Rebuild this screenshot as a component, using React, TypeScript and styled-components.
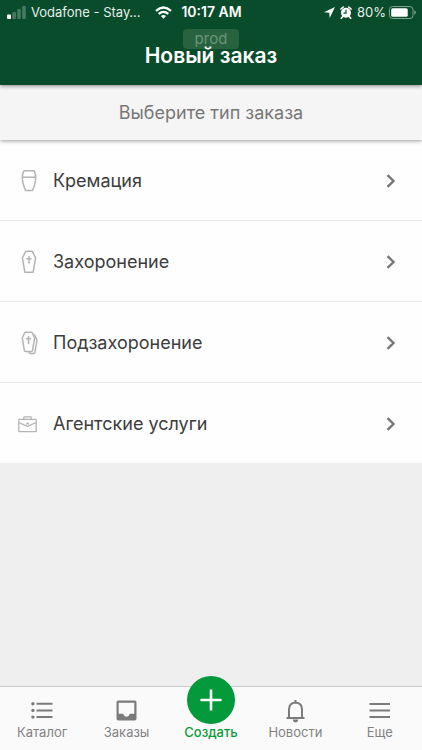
import React from 'react';
import styled, { createGlobalStyle } from 'styled-components';

const GlobalStyle = createGlobalStyle`
  *, *::before, *::after { box-sizing: border-box; }
  body { margin: 0; background: #efefef; font-family: Inter, 'Liberation Sans', sans-serif; }
`;

const Screen = styled.div`
  min-height: 100vh;
  display: flex;
  flex-direction: column;
  background: #efefef;
`;

const Header = styled.header`
  position: relative;
  z-index: 2;
  height: 85px;
  background: #094c2b;
  color: #fff;
  box-shadow: 0 1px 4px rgba(0, 0, 0, 0.45);
`;

const StatusBar = styled.div`
  display: grid;
  grid-template-columns: 1fr auto 1fr;
  align-items: center;
  height: 24px;
  padding: 0 6px 0 7px;
  font-size: 13px;
  line-height: 24px;
  color: #e6eee9;
  white-space: nowrap;
`;

const StatusGroup = styled.div<{ $end?: boolean }>`
  display: flex;
  align-items: center;
  justify-content: ${(p) => (p.$end ? 'flex-end' : 'flex-start')};
  gap: 5px;
`;

const Carrier = styled.span`
  margin-right: 9px;
`;

const Clock = styled.time`
  font-size: 14px;
  font-weight: 600;
  color: #fff;
`;

const Battery = styled.span`
  display: flex;
  align-items: center;
  gap: 3px;
`;

const EnvBadge = styled.span`
  position: absolute;
  top: 29px;
  left: 50%;
  transform: translateX(-50%);
  width: 56px;
  height: 20px;
  border-radius: 4px;
  background: #28633f;
  color: #6b957b;
  font-size: 15px;
  line-height: 20px;
  text-align: center;
`;

const Title = styled.h1`
  position: relative;
  margin: 17px 0 0;
  font-size: 21px;
  line-height: 30px;
  font-weight: 600;
  text-align: center;
`;

const Prompt = styled.p`
  position: relative;
  z-index: 1;
  margin: 0;
  height: 55px;
  padding-top: 1px;
  background: #f5f5f5;
  box-shadow: 0 1px 4px rgba(0, 0, 0, 0.4);
  color: #777;
  font-size: 18px;
  line-height: 54px;
  text-align: center;
`;

const Content = styled.main`
  flex: 1;
`;

const OrderList = styled.ul`
  margin: 0;
  padding: 0;
  list-style: none;
  background: #fefefe;
`;

const OrderItem = styled.li`
  & + & { border-top: 1px solid #e8e8e8; }
`;

const OrderButton = styled.button`
  display: flex;
  align-items: center;
  width: 100%;
  height: 80px;
  padding: 1px 26px 0 17px;
  border: 0;
  background: none;
  color: #3c3c3c;
  font-family: inherit;
  font-size: 18px;
  line-height: 24px;
  text-align: left;
  cursor: pointer;
`;

const OrderIcon = styled.svg`
  flex: none;
  width: 24px;
  height: 26px;
  margin-right: 12px;
  fill: none;
  stroke: #b4b4b4;
  stroke-width: 1.5;
  stroke-linejoin: round;
  stroke-linecap: round;
`;

const OrderLabel = styled.span`
  flex: 1;
`;

const TabBar = styled.nav`
  position: sticky;
  bottom: 0;
  display: grid;
  grid-template-columns: repeat(5, 1fr);
  grid-template-rows: minmax(0, 1fr);
  height: 64px;
  border-top: 1px solid #c9c9c9;
  background: #fafafa;
`;

const Tab = styled.a<{ $active?: boolean }>`
  display: flex;
  flex-direction: column;
  align-items: center;
  justify-content: flex-end;
  padding-bottom: 9px;
  color: ${(p) => (p.$active ? '#0a9a3c' : '#828282')};
  font-size: 13px;
  font-weight: ${(p) => (p.$active ? 500 : 400)};
  line-height: 17px;
  text-decoration: none;
`;

const TabIcon = styled.svg`
  flex: none;
  width: 30px;
  height: 28px;
  fill: none;
  stroke: #7b7b7b;
  stroke-width: 2;
`;

const CreateCircle = styled.span`
  flex: none;
  display: flex;
  align-items: center;
  justify-content: center;
  width: 48px;
  height: 48px;
  border-radius: 50%;
  background: #049a3b;
`;

const orders = [
  {
    label: 'Кремация',
    icon: (
      <path d="M7.500 2.800h9q.6 0 .9.700C18.300 5 18.700 7.500 18.700 9.500C18.700 14 17.200 18.500 15.500 22.500H8.500C6.800 18.500 5.300 14 5.300 9.500C5.300 7.500 5.700 5 6.600 3.500Q6.900 2.800 7.500 2.800zM5.500 9.300h13" />
    ),
  },
  {
    label: 'Захоронение',
    icon: (
      <>
        <path d="M8.800 2.200h6.400l3.400 6.600-2.400 14.400H7.800L5.400 8.800z" />
        <path d="M12 7.500v6.500M10 9.800h4" />
      </>
    ),
  },
  {
    label: 'Подзахоронение',
    icon: (
      <>
        <path d="M8.600 2.200h5.800q.6 0 .9.600l2.100 4.700q.3.600.1 1.200l-2 12q-.1.800-.9.800H8.300q-.8 0-.9-.8l-2-12q-.1-.6.1-1.200l2.200-4.700q.3-.6.9-.6z" />
        <path d="M11.500 6.500v7M9.500 8.800h4M17.400 4.800l2.400 4.800q.3.600.1 1.200l-2.100 11.900q-.2.800-1 .8h-3.500q-.7 0-1-.6l-.5-1.200" />
      </>
    ),
  },
  {
    label: 'Агентские услуги',
    icon: (
      <path d="M2.500 8.300h16q.7 0 .7.700v11q0 .7-.7.700h-16q-.7 0-.7-.700v-11q0-.7.7-.700zM6.800 8.300V6.500q0-.7.7-.700h6q.7 0 .7.700v1.800M1.800 11.500l8.700 3.900 8.700-3.900M9.700 13q0-.8.8-.8t.8.8" strokeWidth="1.300" />
    ),
  },
];

const tabs = [
  {
    label: 'Каталог',
    icon: (
      <>
        <path d="M9.500 7.700h16M9.500 14.400h16M9.500 21.100h16" />
        <path d="M5.900 7.700h.01M5.900 14.400h.01M5.900 21.100h.01" strokeWidth="3.400" strokeLinecap="round" />
      </>
    ),
  },
  {
    label: 'Заказы',
    icon: (
      <path
        d="M6.300 4.500h16.400q1.800 0 1.800 1.800v16.400q0 1.800-1.800 1.800H6.300q-1.800 0-1.800-1.800V6.300Q4.500 4.500 6.300 4.500zM6.700 6.700v11h4.500q.9 3 3.300 3t3.300-3h4.500v-11z"
        fill="#7b7b7b"
        fillRule="evenodd"
        stroke="none"
      />
    ),
  },
  { label: 'Создать', active: true },
  {
    label: 'Новости',
    icon: (
      <>
        <path d="M6.500 22h18M9 22v-8.500q0-6.500 6.500-7 6.500 .5 6.500 7V22" />
        <path d="M15.500 6V4M14 24.500q.3 1 1.500 1t1.500-1z" />
      </>
    ),
  },
  { label: 'Еще', icon: <path d="M4.500 8h20.500M4.500 14.500h20.500M4.500 21h20.500" /> },
];

export default function App() {
  return (
    <>
      <GlobalStyle />
      <Screen>
        <Header>
          <StatusBar>
            <StatusGroup>
              <svg width="19" height="13" viewBox="0 0 19 13" fill="#fff">
                <rect y="8.500" width="4" height="4.500" rx="1" />
                <g opacity=".25">
                  <rect x="5.300" y="6" width="3.600" height="7" rx="1" />
                  <rect x="10.200" y="3" width="3.600" height="10" rx="1" />
                  <rect x="15.200" width="3.600" height="13" rx="1" />
                </g>
              </svg>
              <Carrier>Vodafone - Stay…</Carrier>
              <svg width="17" height="13" viewBox="0 0 17 13" fill="none" stroke="#fff" strokeWidth="2.300">
                <path d="M1 4.800Q8.500-1.800 16 4.800M3.700 7.900Q8.500 3.800 13.300 7.900" />
                <path d="M8.500 12.700L5.900 10Q8.500 8 11.100 10z" fill="#fff" stroke="none" />
              </svg>
            </StatusGroup>
            <Clock>10:17 AM</Clock>
            <StatusGroup $end>
              <svg width="11" height="11" viewBox="0 0 11 11" fill="#fff">
                <path d="M11 0L0 5.300l5.300.400.4 5.300z" />
              </svg>
              <svg width="12" height="13" viewBox="0 0 12 13">
                <circle cx="6" cy="6.800" r="5" fill="#fff" />
                <path d="M.9 3L3.300 1M11.100 3L8.700 1M2.600 10.800L1.300 12.300M9.400 10.800l1.300 1.500" stroke="#fff" strokeWidth="1.600" strokeLinecap="round" />
                <path d="M6 3.700v3.500H3.500" fill="none" stroke="#094c2b" strokeWidth="1.200" />
              </svg>
              <Battery>
                80%
                <svg width="27" height="13" viewBox="0 0 27 13">
                  <rect x=".5" y=".5" width="23.500" height="12" rx="3" fill="none" stroke="#7fa28e" />
                  <rect x="2.200" y="2.200" width="16.500" height="8.600" rx="1.500" fill="#fff" />
                  <path d="M25.300 4.300q1.500.600 1.500 2.200t-1.500 2.200z" fill="#7fa28e" />
                </svg>
              </Battery>
            </StatusGroup>
          </StatusBar>
          <EnvBadge>prod</EnvBadge>
          <Title>Новый заказ</Title>
        </Header>
        <Prompt>Выберите тип заказа</Prompt>
        <Content>
          <OrderList>
            {orders.map(({ label, icon }) => (
              <OrderItem key={label}>
                <OrderButton type="button">
                  <OrderIcon viewBox="0 0 24 26" aria-hidden="true">{icon}</OrderIcon>
                  <OrderLabel>{label}</OrderLabel>
                  <svg width="10" height="14" viewBox="0 0 10 14" fill="none" stroke="#777" strokeWidth="2.400" aria-hidden="true">
                    <path d="M1.500 1.200L7.500 7l-6 5.800" />
                  </svg>
                </OrderButton>
              </OrderItem>
            ))}
          </OrderList>
        </Content>
        <TabBar>
          {tabs.map(({ label, icon, active }) => (
            <Tab key={label} href="#" $active={active} aria-current={active ? 'page' : undefined}>
              {active ? (
                <CreateCircle>
                  <svg width="22" height="22" viewBox="0 0 22 22" stroke="#fff" strokeWidth="2.600" strokeLinecap="round" aria-hidden="true">
                    <path d="M11 1.500v19M1.500 11h19" />
                  </svg>
                </CreateCircle>
              ) : (
                <TabIcon viewBox="0 0 30 28" aria-hidden="true">{icon}</TabIcon>
              )}
              {label}
            </Tab>
          ))}
        </TabBar>
      </Screen>
    </>
  );
}
